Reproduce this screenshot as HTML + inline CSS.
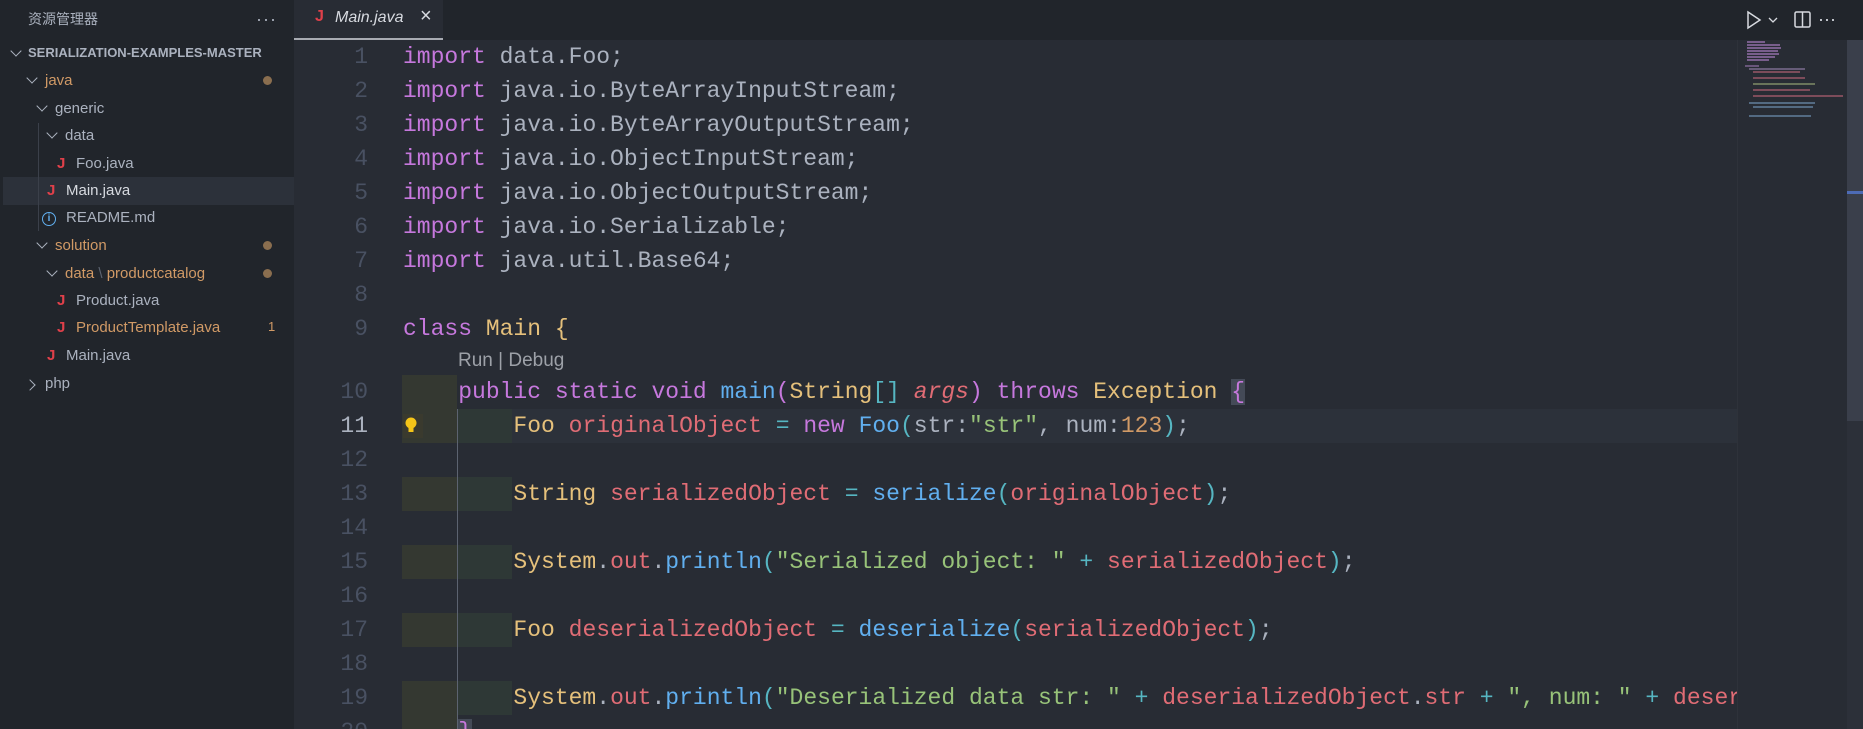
<!DOCTYPE html>
<html><head><meta charset="utf-8"><style>
*{margin:0;padding:0;box-sizing:border-box}
body{width:1863px;height:729px;overflow:hidden;background:#282c34;font-family:"Liberation Sans","Noto Sans CJK SC",sans-serif;position:relative}
.side{position:absolute;left:0;top:0;width:294px;height:729px;background:#21252b}
.sd{position:absolute;white-space:nowrap;font-size:15px;color:#abb2bf}
.chev{position:absolute;width:8px;height:8px;border-right:1.3px solid #abb2bf;border-bottom:1.3px solid #abb2bf;transform:rotate(45deg)}
.chevr{transform:rotate(-45deg)}
.J{position:absolute;color:#e0404a;font-weight:bold;font-size:15px}
.dot{position:absolute;width:9px;height:9px;border-radius:50%;background:#8a6e4f}
.tabs{position:absolute;left:294px;top:0;width:1569px;height:40px;background:#21252b}
.code{position:absolute;left:294px;top:40px;width:1443px;height:689px;overflow:hidden}
.ln{position:absolute;left:0;width:74px;text-align:right;font-family:"Liberation Mono",monospace;font-size:23px;color:#495162;height:34px;line-height:34px}
.l{position:absolute;left:109px;white-space:pre;font-family:"Liberation Mono",monospace;font-size:23px;height:34px;line-height:34px;color:#abb2bf}
.k{color:#c678dd}.t{color:#e5c07b}.v{color:#e06c75}.f{color:#61afef}.s{color:#98c379}.n{color:#d19a66}.c{color:#56b6c2}
.g1{position:absolute;left:108px;width:55px;height:34px;background:#343831}
.g2{position:absolute;left:163px;width:55px;height:34px;background:#2e3836}
</style></head><body>
<div class="side">
 <div class="sd" style="left:28px;top:9px;font-size:14px;color:#abb2bf">资源管理器</div>
 <div class="sd" style="left:256px;top:9px;font-size:18px;letter-spacing:1px">···</div>
 <div class="chev" style="left:12px;top:47px"></div>
 <div class="sd" style="left:28px;top:45px;font-size:13px;font-weight:bold">SERIALIZATION-EXAMPLES-MASTER</div>
 <div style="position:absolute;left:3px;top:177px;width:291px;height:28px;background:#2c313a"></div>
 <div style="position:absolute;left:38px;top:123px;width:1px;height:108px;background:#3b404a"></div>
 <div class="chev" style="left:28px;top:74px"></div><div class="sd" style="left:45px;top:72px;color:#d19a66">java</div><div class="dot" style="left:263px;top:76px"></div>
 <div class="chev" style="left:38px;top:102px"></div><div class="sd" style="left:55px;top:100px">generic</div>
 <div class="chev" style="left:48px;top:129px"></div><div class="sd" style="left:65px;top:127px">data</div>
 <div class="J" style="left:57px;top:155px">J</div><div class="sd" style="left:76px;top:155px">Foo.java</div>
 <div class="J" style="left:47px;top:182px">J</div><div class="sd" style="left:66px;top:182px;color:#d7dae0">Main.java</div>
 <div style="position:absolute;left:42px;top:212px;width:14px;height:14px;border:1.5px solid #61afef;border-radius:50%;color:#61afef;font-size:10px;text-align:center;line-height:11px;font-weight:bold">i</div><div class="sd" style="left:66px;top:209px">README.md</div>
 <div class="chev" style="left:38px;top:239px"></div><div class="sd" style="left:55px;top:237px;color:#d19a66">solution</div><div class="dot" style="left:263px;top:241px"></div>
 <div class="chev" style="left:48px;top:267px"></div><div class="sd" style="left:65px;top:265px;color:#d19a66">data<span style="color:#5c6370"> \ </span>productcatalog</div><div class="dot" style="left:263px;top:269px"></div>
 <div class="J" style="left:57px;top:292px">J</div><div class="sd" style="left:76px;top:292px">Product.java</div>
 <div class="J" style="left:57px;top:319px">J</div><div class="sd" style="left:76px;top:319px;color:#d19a66">ProductTemplate.java</div><div class="sd" style="left:268px;top:319px;font-size:13px;color:#d19a66">1</div>
 <div class="J" style="left:47px;top:347px">J</div><div class="sd" style="left:66px;top:347px">Main.java</div>
 <div class="chev chevr" style="left:26px;top:381px"></div><div class="sd" style="left:45px;top:375px">php</div>
</div>
<div class="tabs">
 <div style="position:absolute;left:0;top:0;width:149px;height:40px;background:#282c34;border-bottom:2px solid #a8abb2"></div>
 <div class="J" style="left:21px;top:8px;font-size:16px">J</div>
 <div style="position:absolute;left:41px;top:9px;font-size:16px;font-style:italic;color:#d7dae0">Main.java</div>
 <div style="position:absolute;left:126px;top:5px;font-size:20px;color:#d7dae0">×</div>
 <svg style="position:absolute;left:1452px;top:10px" width="90" height="20"><path d="M2 2 L14 10 L2 18 Z" fill="none" stroke="#d7dae0" stroke-width="1.5"/><path d="M23 8 L27 12 L31 8" fill="none" stroke="#d7dae0" stroke-width="1.3"/><rect x="49" y="2" width="15" height="15" rx="1.5" fill="none" stroke="#d7dae0" stroke-width="1.5"/><line x1="56.5" y1="2" x2="56.5" y2="17" stroke="#d7dae0" stroke-width="1.5"/></svg>
 <div style="position:absolute;left:1524px;top:9px;font-size:18px;color:#d7dae0">···</div>
</div>
<div style="position:absolute;left:1737px;top:40px;width:1px;height:689px;background:#2e323a"></div>
<div style="position:absolute;left:1847px;top:40px;width:16px;height:689px;background:#2c3039"></div>
<div style="position:absolute;left:1847px;top:40px;width:16px;height:381px;background:#3a3f4b"></div>
<div style="position:absolute;left:1847px;top:191px;width:16px;height:3px;background:#4d6bb5"></div>
<svg style="position:absolute;left:1745px;top:40px" width="100" height="80">
<g stroke-width="1.3"><line x1="2" y1="2" x2="20" y2="2" stroke="#a87bc0"/><line x1="2" y1="5" x2="35" y2="5" stroke="#a87bc0"/><line x1="2" y1="8" x2="36" y2="8" stroke="#a87bc0"/><line x1="2" y1="11" x2="33" y2="11" stroke="#a87bc0"/><line x1="2" y1="14" x2="34" y2="14" stroke="#a87bc0"/><line x1="2" y1="17" x2="30" y2="17" stroke="#a87bc0"/><line x1="2" y1="20" x2="24" y2="20" stroke="#a87bc0"/><line x1="0" y1="26" x2="14" y2="26" stroke="#8a6ea0"/><line x1="4" y1="29" x2="60" y2="29" stroke="#8a7aa0"/><line x1="8" y1="32" x2="55" y2="32" stroke="#b06070"/><line x1="8" y1="38" x2="60" y2="38" stroke="#b06070"/><line x1="8" y1="44" x2="70" y2="44" stroke="#90a070"/><line x1="8" y1="50" x2="65" y2="50" stroke="#b06070"/><line x1="8" y1="56" x2="98" y2="56" stroke="#b06070"/><line x1="4" y1="63" x2="70" y2="63" stroke="#6d8fb0"/><line x1="8" y1="67" x2="68" y2="67" stroke="#6d8fb0"/><line x1="4" y1="76" x2="66" y2="76" stroke="#6d8fb0"/></g></svg>
<div class="code">
 <div style="position:absolute;left:163px;top:369px;width:1300px;height:34px;background:#2c313a"></div>
 <div class="g1" style="top:335px"></div>
 <div class="g1" style="top:369px"></div><div class="g2" style="top:369px"></div>
 <div class="g1" style="top:437px"></div><div class="g2" style="top:437px"></div>
 <div class="g1" style="top:505px"></div><div class="g2" style="top:505px"></div>
 <div class="g1" style="top:573px"></div><div class="g2" style="top:573px"></div>
 <div class="g1" style="top:641px"></div><div class="g2" style="top:641px"></div>
 <div class="g1" style="top:675px;height:14px"></div>
 <div style="position:absolute;left:163px;top:369px;width:1px;height:320px;background:#5c6370"></div>
 <div style="position:absolute;left:109px;top:374px;width:20px;height:24px;background:#3a3a2e"></div>
 <svg style="position:absolute;left:110px;top:376px" width="16" height="20"><circle cx="7" cy="7" r="5.5" fill="#f5c518"/><rect x="4.5" y="11" width="5" height="5" fill="#f5c518"/></svg>
 <div class="ln" style="top:0">1</div><div class="ln" style="top:34px">2</div><div class="ln" style="top:68px">3</div><div class="ln" style="top:102px">4</div><div class="ln" style="top:136px">5</div><div class="ln" style="top:170px">6</div><div class="ln" style="top:204px">7</div><div class="ln" style="top:238px">8</div><div class="ln" style="top:272px">9</div>
 <div class="ln" style="top:335px">10</div><div class="ln" style="top:369px;color:#abb2bf">11</div><div class="ln" style="top:403px">12</div><div class="ln" style="top:437px">13</div><div class="ln" style="top:471px">14</div><div class="ln" style="top:505px">15</div><div class="ln" style="top:539px">16</div><div class="ln" style="top:573px">17</div><div class="ln" style="top:607px">18</div><div class="ln" style="top:641px">19</div><div class="ln" style="top:675px">20</div>
 <div class="l" style="top:0"><span class="k">import</span> data.Foo;</div>
 <div class="l" style="top:34px"><span class="k">import</span> java.io.ByteArrayInputStream;</div>
 <div class="l" style="top:68px"><span class="k">import</span> java.io.ByteArrayOutputStream;</div>
 <div class="l" style="top:102px"><span class="k">import</span> java.io.ObjectInputStream;</div>
 <div class="l" style="top:136px"><span class="k">import</span> java.io.ObjectOutputStream;</div>
 <div class="l" style="top:170px"><span class="k">import</span> java.io.Serializable;</div>
 <div class="l" style="top:204px"><span class="k">import</span> java.util.Base64;</div>
 <div class="l" style="top:272px"><span class="k">class</span> <span class="t">Main</span> <span class="t">{</span></div>
 <div style="position:absolute;left:164px;top:306px;font-size:19px;color:#9da1a8;line-height:30px;white-space:pre">Run | Debug</div>
 <div class="l" style="top:335px">    <span class="k">public static void</span> <span class="f">main</span><span class="k">(</span><span class="t">String</span><span class="c">[]</span> <span class="v" style="font-style:italic">args</span><span class="k">)</span> <span class="k">throws</span> <span class="t">Exception</span> <span class="k" style="background:#444a57">{</span></div>
 <div class="l" style="top:369px">        <span class="t">Foo</span> <span class="v">originalObject</span> <span class="c">=</span> <span class="k">new</span> <span class="f">Foo</span><span class="c">(</span>str:<span class="s">"str"</span>, num:<span class="n">123</span><span class="c">)</span>;</div>
 <div class="l" style="top:437px">        <span class="t">String</span> <span class="v">serializedObject</span> <span class="c">=</span> <span class="f">serialize</span><span class="c">(</span><span class="v">originalObject</span><span class="c">)</span>;</div>
 <div class="l" style="top:505px">        <span class="t">System</span>.<span class="v">out</span>.<span class="f">println</span><span class="c">(</span><span class="s">"Serialized object: "</span> <span class="c">+</span> <span class="v">serializedObject</span><span class="c">)</span>;</div>
 <div class="l" style="top:573px">        <span class="t">Foo</span> <span class="v">deserializedObject</span> <span class="c">=</span> <span class="f">deserialize</span><span class="c">(</span><span class="v">serializedObject</span><span class="c">)</span>;</div>
 <div class="l" style="top:641px">        <span class="t">System</span>.<span class="v">out</span>.<span class="f">println</span><span class="c">(</span><span class="s">"Deserialized data str: "</span> <span class="c">+</span> <span class="v">deserializedObject</span>.<span class="v">str</span> <span class="c">+</span> <span class="s">", num: "</span> <span class="c">+</span> <span class="v">deserializedObject</span>.<span class="v">num</span><span class="c">)</span>;</div>
 <div class="l" style="top:675px">    <span class="k" style="background:#444a57">}</span></div>
</div>
</body></html>
